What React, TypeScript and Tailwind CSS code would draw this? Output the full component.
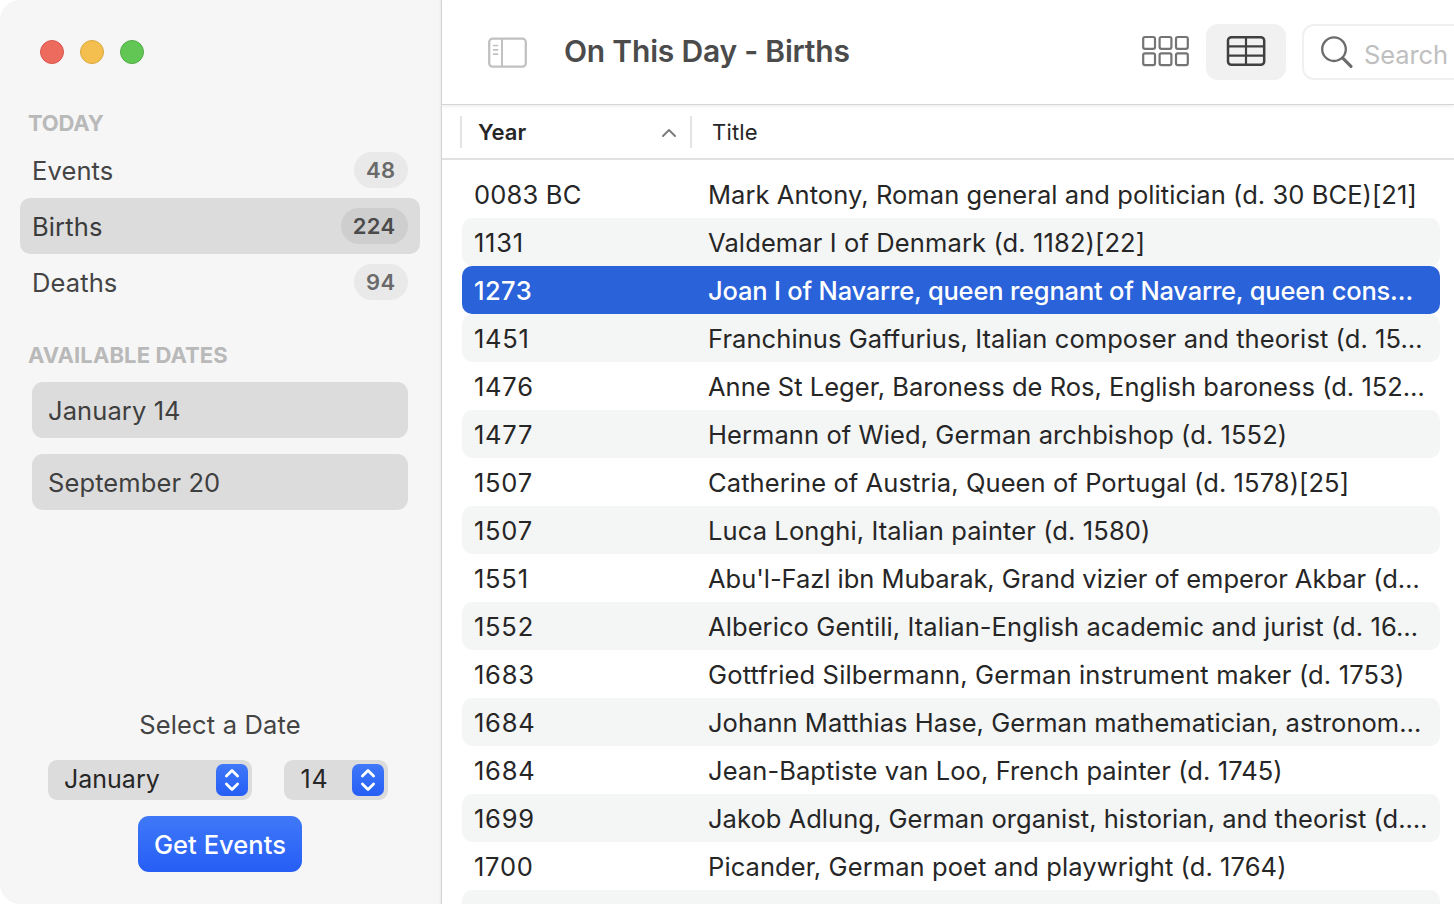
import React from "react";

type Category = { name: string; count: number; selected?: boolean };
type Person = { year: string; title: string; tracking: string; selected?: boolean };

const categories: Category[] = [
  { name: "Events", count: 48 },
  { name: "Births", count: 224, selected: true },
  { name: "Deaths", count: 94 },
];

const people: Person[] = [
  { year: "0083 BC", title: "Mark Antony, Roman general and politician (d. 30 BCE)[21]", tracking: "tracking-[0.07px]" },
  { year: "1131", title: "Valdemar I of Denmark (d. 1182)[22]", tracking: "tracking-[0.12px]" },
  { year: "1273", title: "Joan I of Navarre, queen regnant of Navarre, queen cons…", tracking: "tracking-[-0.2px]", selected: true },
  { year: "1451", title: "Franchinus Gaffurius, Italian composer and theorist (d. 15…", tracking: "tracking-[0.08px]" },
  { year: "1476", title: "Anne St Leger, Baroness de Ros, English baroness (d. 152…", tracking: "tracking-[0.02px]" },
  { year: "1477", title: "Hermann of Wied, German archbishop (d. 1552)", tracking: "tracking-[0.08px]" },
  { year: "1507", title: "Catherine of Austria, Queen of Portugal (d. 1578)[25]", tracking: "tracking-[0.09px]" },
  { year: "1507", title: "Luca Longhi, Italian painter (d. 1580)", tracking: "tracking-[0.11px]" },
  { year: "1551", title: "Abu'l-Fazl ibn Mubarak, Grand vizier of emperor Akbar (d…", tracking: "tracking-[-0.04px]" },
  { year: "1552", title: "Alberico Gentili, Italian-English academic and jurist (d. 16…", tracking: "tracking-[0.09px]" },
  { year: "1683", title: "Gottfried Silbermann, German instrument maker (d. 1753)", tracking: "tracking-[0.16px]" },
  { year: "1684", title: "Johann Matthias Hase, German mathematician, astronom…", tracking: "tracking-[0.04px]" },
  { year: "1684", title: "Jean-Baptiste van Loo, French painter (d. 1745)", tracking: "tracking-[0.08px]" },
  { year: "1699", title: "Jakob Adlung, German organist, historian, and theorist (d.…", tracking: "tracking-[0.03px]" },
  { year: "1700", title: "Picander, German poet and playwright (d. 1764)", tracking: "tracking-[0.09px]" },
  { year: "", title: "", tracking: "tracking-[0px]" },
];

function SidebarIcon() {
  return (
    <svg width="40" height="32" viewBox="0 0 40 32" fill="none" stroke="#c1c1c1">
      <rect x="1.2" y="2.7" width="36.6" height="28" rx="3.4" strokeWidth="2.3" />
      <path d="M14 3V30.5" strokeWidth="2" />
      <path d="M5.6 9.5H9.6M5.6 13.8H9.6M5.6 18.2H9.6" strokeWidth="1.7" strokeLinecap="round" />
    </svg>
  );
}

function GridIcon() {
  return (
    <svg width="48" height="32" viewBox="0 0 48 32" fill="none" stroke="#747474" strokeWidth="2.2">
      {[1.2, 17.6, 34].map((x) =>
        [2, 18.3].map((y) => <rect key={`${x}-${y}`} x={x} y={y} width="11.8" height="11.8" rx="1.8" />),
      )}
    </svg>
  );
}

function TableIcon() {
  return (
    <svg width="40" height="32" viewBox="0 0 40 32" fill="none" stroke="#404040" strokeWidth="2.5">
      <rect x="2" y="1.2" width="36.2" height="27.6" rx="3.4" />
      <path d="M20 1V29M2 10.3H38M2 19.6H38" strokeWidth="2.2" />
    </svg>
  );
}

function SearchIcon() {
  return (
    <svg width="34" height="34" viewBox="0 0 34 34" fill="none" stroke="#6c6c6c" strokeLinecap="round">
      <circle cx="14" cy="14.2" r="11.8" strokeWidth="2.3" />
      <path d="M22.8 23.2L31 31.3" strokeWidth="3.2" />
    </svg>
  );
}

function Stepper() {
  return (
    <span className="flex size-8 items-center justify-center rounded-[7px] bg-linear-to-b from-[#3f78f7] to-[#265ef6]">
      <svg width="16" height="24" viewBox="0 0 16 24" fill="none" stroke="#fff" strokeWidth="2.8" strokeLinecap="round" strokeLinejoin="round">
        <path d="M2.4 8L8 2.6L13.6 8M2.4 16L8 21.4L13.6 16" />
      </svg>
    </span>
  );
}

function Sidebar() {
  return (
    <aside className="flex w-[442px] shrink-0 flex-col rounded-l-[20px] border-r border-[#d4d4d4] bg-[#f6f6f6] text-[#444] shadow-[inset_-2px_0_2px_-1px_#e9e9e9]">
      <div className="flex gap-4 pt-10 pl-10">
        <span className="size-6 rounded-full border border-[#d9574c] bg-[#ed6a5f]" />
        <span className="size-6 rounded-full border border-[#dca73f] bg-[#f5bf4f]" />
        <span className="size-6 rounded-full border border-[#51ac42] bg-[#62c655]" />
      </div>

      <h2 className="mt-11 h-[30px] pl-[28px] text-[22px] leading-[30px] font-bold tracking-[-0.2px] text-[#b9b9b9]">TODAY</h2>
      <ul className="mt-1 pr-[21px] pl-5">
        {categories.map((c) => (
          <li
            key={c.name}
            className={`flex h-14 items-center justify-between rounded-[10px] px-3 text-[25.5px] tracking-[0.12px] ${c.selected ? "bg-[#dcdcdc] text-[#3b3b3b]" : ""}`}
          >
            <span className="pt-[3px]">{c.name}</span>
            <span
              className={`flex h-9 items-center rounded-full pr-[12.5px] pl-3 text-[22px] font-semibold tracking-[0.35px] ${c.selected ? "bg-[#cecece] text-[#4b4b4b]" : "bg-[#e9e9e9] text-[#6a6a6a]"}`}
            >
              {c.count}
            </span>
          </li>
        ))}
      </ul>

      <h2 className="mt-[30px] h-[30px] pl-[28px] text-[22px] leading-[30px] font-bold tracking-[0.1px] text-[#b9b9b9]">AVAILABLE DATES</h2>
      <div className="mt-3 flex flex-col gap-4 pr-[33px] pl-8 text-[25.5px] tracking-[0.1px] text-[#3f3f3f]">
        <div className="flex h-14 items-center rounded-[11px] bg-[#dcdcdc] px-4 pt-[3px]">January 14</div>
        <div className="flex h-14 items-center rounded-[11px] bg-[#dcdcdc] px-4 pt-[3px]">September 20</div>
      </div>

      <div className="mt-auto flex flex-col items-center pr-[1px] pb-8 text-[25px]">
        <div className="mb-[17px] text-[25.5px] leading-9 tracking-[0.15px]">Select a Date</div>
        <div className="mb-4 flex w-full gap-8 pl-12 text-[#262626]">
          <div className="flex h-10 w-[204px] items-center justify-between rounded-[9px] bg-[#dcdcdc] pr-1 pl-4">
            January
            <Stepper />
          </div>
          <div className="flex h-10 w-[104px] items-center justify-between rounded-[9px] bg-[#dcdcdc] pr-1 pl-[16.5px] tracking-[0.9px]">
            14
            <Stepper />
          </div>
        </div>
        <button className="h-14 w-[164px] rounded-[11px] bg-linear-to-b from-[#3f78f7] to-[#265ef6] pt-[3px] text-[25.5px] font-medium tracking-[0.05px] whitespace-nowrap text-white">
          Get Events
        </button>
      </div>
    </aside>
  );
}

function Toolbar() {
  return (
    <header className="flex h-[105px] shrink-0 border-b border-[#d6d6d6] pl-[46px] shadow-[0_2px_3px_#f1f1f1]">
      <div className="shrink-0 pt-[36px]">
        <SidebarIcon />
      </div>
      <h1 className="w-[614px] shrink-0 pl-[36px] text-[30px] leading-[103px] font-semibold tracking-[-0.2px] whitespace-nowrap text-[#4b4b4b]">
        On This Day - Births
      </h1>
      <div className="shrink-0 pt-[35px]">
        <GridIcon />
      </div>
      <div className="mt-6 ml-4 flex h-14 w-20 shrink-0 items-center justify-center rounded-xl bg-[#f1f1f1]">
        <TableIcon />
      </div>
      <div className="mt-6 ml-4 flex h-14 w-[300px] shrink-0 items-center gap-[10px] rounded-xl border-2 border-[#f0f0f0] pl-4 text-[25.5px] tracking-[-0.1px] text-[#bfbfbf]">
        <SearchIcon />
        <span className="pt-[7px]">Search</span>
      </div>
    </header>
  );
}

export default function App() {
  return (
    <div className="flex h-[904px] w-[1454px] overflow-hidden bg-white font-['Inter',sans-serif]">
      <Sidebar />
      <main className="flex min-w-0 flex-1 flex-col overflow-hidden">
        <Toolbar />
        <div className="flex h-[55px] shrink-0 items-center border-b-2 border-[#e1e1e1] pl-[18px] text-[22px] text-[#262626]">
          <div className="flex h-8 w-[230px] items-center justify-between border-l-2 border-[#e4e4e4] pt-[2px] pr-[13px] pl-4">
            <span className="font-semibold">Year</span>
            <svg width="16" height="10" viewBox="0 0 16 10" fill="none" stroke="#7d7d7d" strokeWidth="2" strokeLinecap="round" strokeLinejoin="round">
              <path d="M2 8L8 2L14 8" />
            </svg>
          </div>
          <div className="flex h-8 items-center border-l-2 border-[#e4e4e4] pt-[2px] pl-5 tracking-[0.2px]">Title</div>
        </div>
        <div className="mt-[10px] w-[998px] pl-5 text-[25.5px] text-[#262626]">
          {people.map((p, i) => (
            <div
              key={i}
              className={`flex h-12 items-center rounded-[10px] pt-[3px] pl-3 whitespace-nowrap ${p.selected ? "bg-[#2962d9] font-medium text-white" : i % 2 ? "bg-[#f4f5f5]" : ""}`}
            >
              <span className={`w-[234px] shrink-0 ${p.year.length > 4 ? "tracking-[0.2px]" : p.selected ? "tracking-[0.4px]" : "tracking-[0.75px]"}`}>
                {p.year}
              </span>
              <span className={p.tracking}>{p.title}</span>
            </div>
          ))}
        </div>
      </main>
    </div>
  );
}
